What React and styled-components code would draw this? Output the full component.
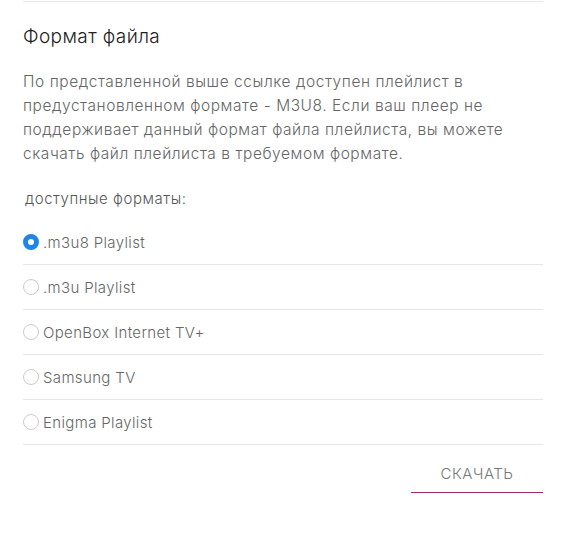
import React, { useState } from 'react';
import styled, { createGlobalStyle } from 'styled-components';

const GlobalStyle = createGlobalStyle`
  body {
    margin: 0;
    background: #fff;
    font-family: Inter, "Noto Sans", sans-serif;
  }
`;

const Panel = styled.div`
  width: 520px;
  margin-left: 23px;
  border-top: 1px solid #e8e8e8;
  margin-top: 1px;
`;

const Title = styled.h3`
  margin: 22px 0 0;
  font-size: 19px;
  font-weight: 300;
  letter-spacing: 0.4px;
  line-height: 26px;
  color: #222;
`;

const Text = styled.p`
  margin: 20px 0 0;
  font-size: 15.5px;
  font-weight: 300;
  letter-spacing: 0.55px;
  line-height: 24px;
  color: #666;
`;

const Caption = styled.div`
  margin: 22px 0 0 2px;
  font-size: 15px;
  font-weight: 300;
  letter-spacing: 0.55px;
  line-height: 22px;
  color: #555;
`;

const List = styled.div`
  margin-top: 10px;
  display: flex;
  flex-direction: column;
`;

const Row = styled.label`
  display: flex;
  align-items: center;
  height: 44px;
  border-bottom: 1px solid #e6e6e6;
  cursor: pointer;
  font-size: 15px;
  font-weight: 300;
  letter-spacing: 0.35px;
  color: #666;
`;

const Radio = styled.span`
  width: 16px;
  height: 16px;
  box-sizing: border-box;
  border-radius: 50%;
  margin-right: 4px;
  border: ${(p) => (p.checked ? '5px solid #1e86e8' : '1px solid #cccccc')};
  background: #fff;
`;

const Footer = styled.div`
  display: flex;
  justify-content: flex-end;
  margin-top: 20px;
`;

const Button = styled.button`
  width: 132px;
  padding: 0 0 9px;
  line-height: 18px;
  border: none;
  border-bottom: 1.5px solid #a3276f;
  background: none;
  font-family: Inter, "Noto Sans", sans-serif;
  font-size: 15px;
  font-weight: 300;
  letter-spacing: 0.5px;
  color: #777;
  text-transform: uppercase;
  cursor: pointer;
`;

const formats = [
  '.m3u8 Playlist',
  '.m3u Playlist',
  'OpenBox Internet TV+',
  'Samsung TV',
  'Enigma Playlist',
];

const App = () => {
  const [selected, setSelected] = useState(0);

  return (
    <>
      <GlobalStyle />
      <Panel>
        <Title>Формат файла</Title>
        <Text>
          По представленной выше ссылке доступен плейлист в предустановленном
          формате - M3U8. Если ваш плеер не поддерживает данный формат файла
          плейлиста, вы можете скачать файл плейлиста в требуемом формате.
        </Text>
        <Caption>доступные форматы:</Caption>
        <List>
          {formats.map((name, i) => (
            <Row key={name} onClick={() => setSelected(i)}>
              <Radio checked={selected === i} />
              {name}
            </Row>
          ))}
        </List>
        <Footer>
          <Button>Скачать</Button>
        </Footer>
      </Panel>
    </>
  );
};

export default App;
